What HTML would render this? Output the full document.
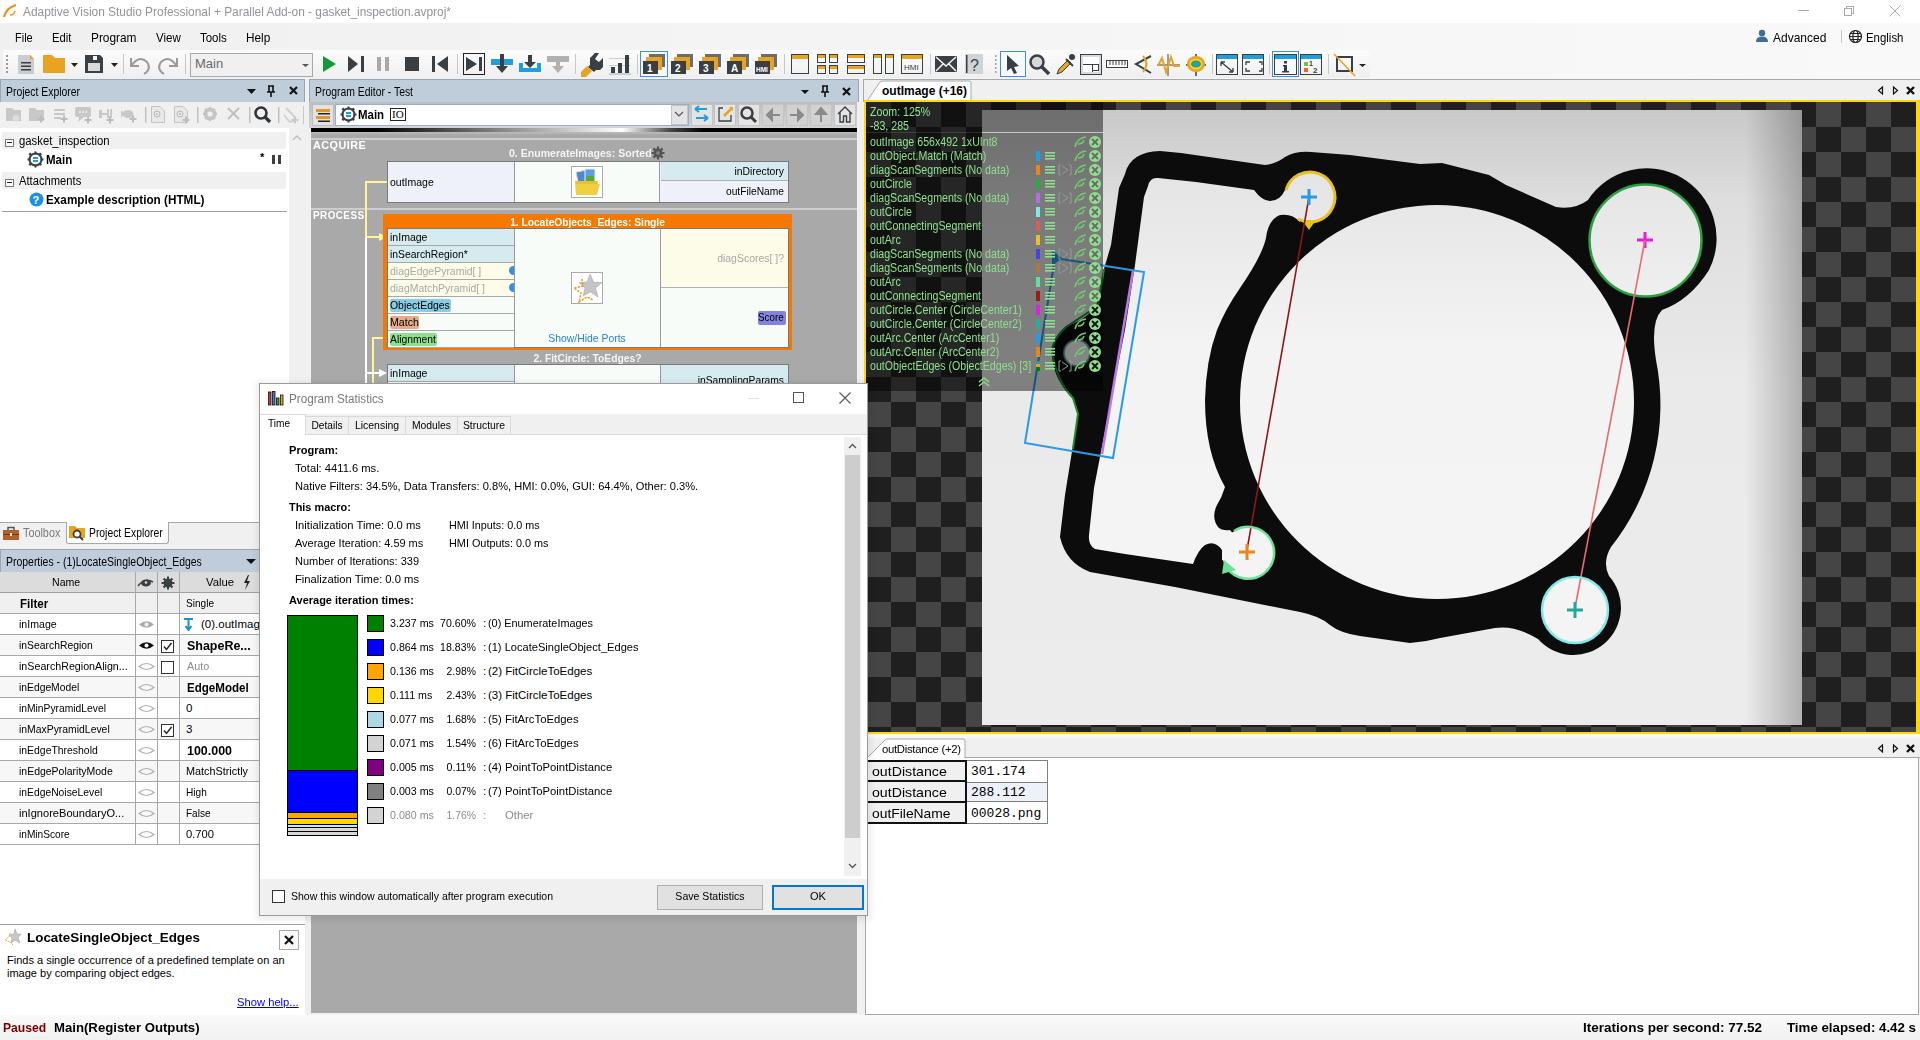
<!DOCTYPE html>
<html><head><meta charset="utf-8">
<style>
*{box-sizing:border-box;margin:0;padding:0}
html,body{width:1920px;height:1040px;overflow:hidden;background:#f0f0f0;font-family:"Liberation Sans",sans-serif;font-size:12px;color:#000}
.a{position:absolute}
.t{position:absolute;white-space:nowrap;line-height:1}
.hdr{position:absolute;background:#bfcddb;border:1px solid #9aa6b2;border-bottom:none}
.b{font-weight:bold}
</style></head><body>

<!-- TITLE BAR -->
<div class="a" style="left:0;top:0;width:1920px;height:23px;background:#fff"></div>
<svg class="a" style="left:2px;top:3px" width="16" height="16" viewBox="0 0 16 16"><path d="M2 14 Q4 5 14 2" stroke="#f28a1c" stroke-width="2" fill="none"/><path d="M13 8 Q12 12 8 12" stroke="#f28a1c" stroke-width="1.3" fill="none"/></svg>
<div class="t" style="left:23px;top:5px;font-size:13px;color:#939399;transform:scaleX(0.915);transform-origin:left;">Adaptive Vision Studio Professional + Parallel Add-on - gasket_inspection.avproj*</div>
<div class="a" style="left:1798px;top:10px;width:11px;height:1px;background:#aaa"></div>
<div class="a" style="left:1846px;top:6px;width:8px;height:8px;border:1px solid #aaa"></div>
<div class="a" style="left:1844px;top:8px;width:8px;height:8px;border:1px solid #aaa;background:#fff"></div>
<svg class="a" style="left:1889px;top:5px" width="12" height="12"><path d="M0.5 0.5 L11.5 11.5 M11.5 0.5 L0.5 11.5" stroke="#aaa" stroke-width="1"/></svg>

<!-- MENU BAR -->
<div class="a" style="left:0;top:23px;width:1920px;height:56px;background:linear-gradient(90deg,#f0f0f0 0%,#f4f4f4 40%,#f9f9f9 100%)"></div>
<div class="t" style="left:15px;top:31px;font-size:13px;transform:scaleX(0.845);transform-origin:left;">File</div>
<div class="t" style="left:52px;top:31px;font-size:13px;transform:scaleX(0.866);transform-origin:left;">Edit</div>
<div class="t" style="left:91px;top:31px;font-size:13px;transform:scaleX(0.913);transform-origin:left;">Program</div>
<div class="t" style="left:156px;top:31px;font-size:13px;transform:scaleX(0.887);transform-origin:left;">View</div>
<div class="t" style="left:200px;top:31px;font-size:13px;transform:scaleX(0.883);transform-origin:left;">Tools</div>
<div class="t" style="left:246px;top:31px;font-size:13px;transform:scaleX(0.908);transform-origin:left;">Help</div>
<div class="t" style="left:1773px;top:31px;font-size:13px;transform:scaleX(0.922);transform-origin:left;">Advanced</div>
<div class="t" style="left:1866px;top:31px;font-size:13px;transform:scaleX(0.879);transform-origin:left;">English</div>

<!-- TOOLBAR -->
<div class="a" style="left:3px;top:50px;width:1367px;height:28px;border-radius:3px;background:linear-gradient(#fcfcfc,#efefef)"></div>
<svg class="a" style="left:0;top:50px" width="1400" height="28" viewBox="0 50 1400 28">
<g fill="#9a9a9a"><rect x="6" y="55" width="2" height="2"/><rect x="6" y="59" width="2" height="2"/><rect x="6" y="63" width="2" height="2"/><rect x="6" y="67" width="2" height="2"/><rect x="6" y="71" width="2" height="2"/></g>
<path d="M18 55 H30 L34 59 V74 H18 Z" fill="#c9cdd1"/><path d="M30 55 L34 59 H30Z" fill="#e8a420"/>
<g fill="#3a3f44"><rect x="21" y="62" width="10" height="1.5"/><rect x="21" y="65.5" width="10" height="1.5"/><rect x="21" y="69" width="10" height="1.5"/></g>
<path d="M43 55 H52 L55 58 H65 V73 H43Z" fill="#e8a420"/>
<path d="M71 63 H78 L74.5 67Z" fill="#222"/>
<path d="M85 55 H100 L103 58 V73 H85Z" fill="#3a3f44"/><rect x="88" y="63" width="12" height="8" fill="#d6dadd"/><rect x="93" y="56" width="4" height="4" fill="#f5f5f5"/>
<path d="M111 63 H118 L114.5 67Z" fill="#222"/>
<rect x="123" y="54" width="1" height="20" fill="#c8c8c8"/>
<path d="M131 58 V66 H139" fill="none" stroke="#9a9a9a" stroke-width="2"/><path d="M132 65 Q139 55 147 62 Q152 69 144 74" fill="none" stroke="#9a9a9a" stroke-width="2"/>
<path d="M177 58 V66 H169" fill="none" stroke="#9a9a9a" stroke-width="2"/><path d="M176 65 Q169 55 161 62 Q156 69 164 74" fill="none" stroke="#9a9a9a" stroke-width="2"/>
<rect x="185" y="54" width="1" height="20" fill="#c8c8c8"/>
<rect x="190.5" y="53.5" width="122" height="23" fill="#f0f0f0" stroke="#a8a8a8"/>
<path d="M302 64 H309 L305.5 67Z" fill="#555"/>
<path d="M323 56 L336 64 L323 72Z" fill="#129a3a"/>
<path d="M348 56 L358 64 L348 72Z" fill="#3a3f44"/><rect x="361" y="56" width="3" height="16" fill="#3a3f44"/>
<rect x="377" y="57" width="4" height="14" fill="#a8a8a8"/><rect x="385" y="57" width="4" height="14" fill="#a8a8a8"/>
<rect x="405" y="57" width="14" height="14" fill="#3a3f44"/>
<rect x="432" y="56" width="3" height="16" fill="#3a3f44"/><path d="M448 56 L437 64 L448 72Z" fill="#3a3f44"/>
<rect x="457" y="54" width="1" height="20" fill="#c8c8c8"/>
<rect x="463.5" y="53.5" width="21" height="21" fill="none" stroke="#222"/>
<path d="M466 57 L477 64 L466 71Z" fill="#3a3f44"/><rect x="479" y="57" width="3" height="14" fill="#3a3f44"/>
<rect x="491" y="59" width="22" height="6" fill="#1f9ee0"/><rect x="500" y="54" width="4" height="13" fill="#3a3f44"/><path d="M496 66 H508 L502 73Z" fill="#3a3f44"/>
<path d="M519 63 H523 V68 H537 V63 H541 V72 H519Z" fill="#1f9ee0"/><rect x="528" y="55" width="4" height="8" fill="#3a3f44"/><path d="M524 62 H536 L530 68Z" fill="#3a3f44"/>
<rect x="547" y="56" width="22" height="6" fill="#b0b0b0"/><rect x="556" y="61" width="4" height="7" fill="#b0b0b0"/><path d="M552 66 H564 L558 73Z" fill="#b0b0b0"/>
<rect x="575" y="54" width="1" height="20" fill="#c8c8c8"/>
<path d="M595 53 L590 58 V65 L588 67 L594 72 L596 70 H600 L603 67 V58 L599 62 L595 59 L599 53Z" fill="#3a3f44"/>
<path d="M587 66 L592 71 L586 77 H581 V72Z" fill="#e8a420"/>
<g fill="#c8d0d6"><rect x="609" y="58" width="22" height="1"/><rect x="609" y="65" width="22" height="1"/><rect x="609" y="73" width="22" height="2"/></g>
<g fill="#3a3f44"><rect x="611" y="67" width="4" height="6"/><rect x="618" y="63" width="4" height="10"/><rect x="625" y="55" width="4" height="18"/></g>
<rect x="637" y="54" width="1" height="20" fill="#c8c8c8"/>
<rect x="640.5" y="51.5" width="27" height="25" fill="#f6f9fd" stroke="#3c8ee8"/>
<g id="lay"><rect x="649" y="54" width="16" height="13" fill="#6b6e70"/><rect x="646" y="57" width="16" height="13" fill="#e8a420"/><rect x="643" y="61" width="15" height="13" fill="#3a3f44"/></g>
<use href="#lay" x="28"/><use href="#lay" x="56"/><use href="#lay" x="84"/><use href="#lay" x="112"/>
<g fill="#fff" font-family="Liberation Sans" font-weight="bold"><text x="647" y="72" font-size="10">1</text><text x="675" y="72" font-size="10">2</text><text x="703" y="72" font-size="10">3</text><text x="731" y="72" font-size="10">A</text><text x="756" y="72" font-size="6.5">HMI</text></g>
<rect x="784" y="54" width="1" height="20" fill="#c8c8c8"/>
<g fill="none" stroke="#3a3f44" stroke-width="1"><rect x="791.5" y="54.5" width="17" height="19"/><rect x="817.5" y="54.5" width="8" height="8"/><rect x="829.5" y="54.5" width="8" height="8"/><rect x="817.5" y="65.5" width="8" height="8"/><rect x="829.5" y="65.5" width="8" height="8"/><rect x="847.5" y="54.5" width="17" height="8"/><rect x="847.5" y="65.5" width="17" height="8"/><rect x="873.5" y="54.5" width="8" height="19"/><rect x="885.5" y="54.5" width="8" height="19"/><rect x="901.5" y="54.5" width="21" height="19"/></g>
<g fill="#e8a420"><rect x="792" y="55" width="16" height="4"/><rect x="818" y="55" width="7" height="3"/><rect x="830" y="55" width="7" height="3"/><rect x="818" y="66" width="7" height="3"/><rect x="830" y="66" width="7" height="3"/><rect x="848" y="55" width="16" height="3"/><rect x="848" y="66" width="16" height="3"/><rect x="874" y="55" width="7" height="3"/><rect x="886" y="55" width="7" height="3"/><rect x="902" y="55" width="20" height="4"/></g>
<text x="904" y="70" font-size="8" font-family="Liberation Sans" fill="#3a3f44">HMI</text>
<rect x="930" y="54" width="1" height="20" fill="#c8c8c8"/>
<rect x="935" y="56" width="22" height="16" rx="1" fill="#3a3f44"/><path d="M936 57 L946 66 L956 57 M936 71 L943 64 M956 71 L949 64" stroke="#f5f5f5" stroke-width="1.5" fill="none"/>
<rect x="965" y="54" width="18" height="20" fill="#d0d4d8"/><rect x="966" y="55" width="1.5" height="18" fill="#3a3f44"/><text x="970" y="71" font-size="16" font-family="Liberation Sans" fill="#3a3f44">?</text>
<g fill="#a0a0a0"><rect x="995" y="55" width="1.5" height="2"/><rect x="995" y="59" width="1.5" height="2"/><rect x="995" y="63" width="1.5" height="2"/><rect x="995" y="67" width="1.5" height="2"/><rect x="995" y="71" width="1.5" height="2"/></g>
<rect x="1000.5" y="51.5" width="25" height="25" fill="#f6f9fd" stroke="#3c8ee8"/>
<path d="M1007 55 L1019 66 L1014 67 L1017 73 L1014 74 L1011 68 L1007 71Z" fill="#3a3f44"/>
<circle cx="1037" cy="62" r="6.5" fill="#d6dadd" stroke="#3a3f44" stroke-width="2.5"/><path d="M1042 67 L1049 74" stroke="#3a3f44" stroke-width="3.5"/>
<path d="M1057 74 L1059 69 L1068 60 L1071 63 L1062 72Z" fill="#e8a420" stroke="#3a3f44" stroke-width="1"/><circle cx="1072" cy="57" r="3" fill="#3a3f44"/><path d="M1066 59 L1073 66" stroke="#3a3f44" stroke-width="2"/>
<rect x="1080.5" y="54.5" width="21" height="20" fill="#d6dadd" stroke="#3a3f44"/><rect x="1083" y="57" width="16" height="15" fill="#fff"/><rect x="1092.5" y="64.5" width="6" height="6" fill="#fff" stroke="#3a3f44"/><path d="M1083 64.5 H1092.5 V72" fill="none" stroke="#3a3f44"/>
<rect x="1106.5" y="60.5" width="21" height="7" fill="#fff" stroke="#3a3f44"/><path d="M1110 61 V65 M1113 61 V65 M1116 61 V65 M1119 61 V65 M1122 61 V65 M1125 61 V65" stroke="#3a3f44"/>
<path d="M1151 56 L1136 64 L1151 73" fill="none" stroke="#3a3f44" stroke-width="2"/><path d="M1143 56 Q1150 64 1143 72" fill="none" stroke="#e8a420" stroke-width="2"/>
<path d="M1157 65 H1180 M1168 54 V76" stroke="#3a3f44" stroke-width="1"/><path d="M1158 66 L1162 58 L1166 72 L1171 57 L1174 66 L1180 66" fill="none" stroke="#e8a420" stroke-width="2"/>
<path d="M1186 65 H1206 M1196 54 V76" stroke="#3a3f44" stroke-width="1.5"/><ellipse cx="1196" cy="64" rx="9" ry="8" fill="#e8a420"/><ellipse cx="1196" cy="64" rx="6.5" ry="5.5" fill="#f4d23c"/><ellipse cx="1196" cy="64" rx="5" ry="3.5" fill="#2aa84a"/><ellipse cx="1196" cy="64" rx="3" ry="2" fill="#1f9ee0"/>
<rect x="1212" y="54" width="1" height="20" fill="#c8c8c8"/>
<g fill="none" stroke="#3a3f44"><rect x="1216.5" y="54.5" width="21" height="20"/><rect x="1242.5" y="54.5" width="21" height="20"/><rect x="1274.5" y="54.5" width="22" height="20"/><rect x="1300.5" y="54.5" width="21" height="20"/></g>
<g fill="#1f9ee0"><rect x="1217" y="55" width="20" height="4"/><rect x="1243" y="55" width="20" height="4"/><rect x="1275" y="55" width="21" height="4"/><rect x="1301" y="55" width="20" height="4"/></g>
<path d="M1221 62 L1233 72 M1221 62 H1225 M1221 62 V66 M1233 72 H1229 M1233 72 V68" stroke="#3a3f44" fill="none" stroke-width="1.3"/>
<path d="M1246 65 V62 H1250 M1259 62 H1262 V65 M1262 68 V71 H1259 M1250 71 H1246 V68" stroke="#3a3f44" fill="none" stroke-width="1.3"/>
<rect x="1269" y="54" width="1" height="20" fill="#c8c8c8"/>
<rect x="1272.5" y="51.5" width="26" height="25" fill="#f6f9fd" stroke="#3c8ee8"/>
<rect x="1274.5" y="54.5" width="22" height="20" fill="none" stroke="#3a3f44"/><rect x="1275" y="55" width="21" height="4" fill="#1f9ee0"/>
<rect x="1284" y="61" width="3" height="2.5" fill="#3a3f44"/><path d="M1283 65 H1287 V71 H1289 V72.5 H1282 V71 H1284 V66.5 H1283Z" fill="#3a3f44"/>
<rect x="1304" y="62" width="4" height="4" fill="#7ac143"/><rect x="1304" y="68" width="4" height="4" fill="#f26522"/>
<text x="1309" y="66" font-size="7" font-family="Liberation Sans" fill="#3a3f44" font-weight="bold">1</text><text x="1313" y="73" font-size="8" font-family="Liberation Sans" fill="#3a3f44" font-weight="bold">2</text>
<rect x="1328" y="54" width="1" height="20" fill="#c8c8c8"/>
<rect x="1337" y="57" width="15" height="14" fill="none" stroke="#3a3f44" stroke-width="2"/><path d="M1334 54 L1355 76" stroke="#e8a420" stroke-width="1.6"/>
<path d="M1359 64 H1366 L1362.5 67Z" fill="#222"/>
</svg>
<div class="t" style="left:195px;top:57px;font-size:13px;color:#6a6a6a">Main</div>


<!-- PROJECT EXPLORER -->
<div class="hdr" style="left:0;top:79px;width:305px;height:23px"></div>
<div class="t" style="left:6px;top:86px;font-size:12px;transform:scaleX(0.867);transform-origin:left;">Project Explorer</div>
<svg class="a" style="left:240px;top:80px" width="65" height="22" viewBox="240 80 65 22">
<path d="M247 89 H256 L251.5 94Z" fill="#111"/>
<path d="M268 86 H274 M269 86 V92 M273 86 V92 M267 92 H275 M271 92 V97" stroke="#111" stroke-width="1.6" fill="none"/>
<path d="M290 87 L297 94 M297 87 L290 94" stroke="#111" stroke-width="2.2"/>
</svg>
<div class="a" style="left:0;top:102px;width:305px;height:26px;background:#f0f0f0"></div>
<svg class="a" style="left:0;top:102px" width="305" height="26" viewBox="0 102 305 26">
<defs><g id="pl"><rect x="-3.5" y="-1" width="7" height="2"/><rect x="-1" y="-3.5" width="2" height="7"/></g>
<g id="gr"><circle cx="0" cy="0" r="3" fill="none" stroke="#c4c4c4" stroke-width="1.6"/><path d="M0 -5 V5 M-5 0 H5 M-3.5 -3.5 L3.5 3.5 M3.5 -3.5 L-3.5 3.5" stroke="#c4c4c4" stroke-width="1.5"/></g></defs>
<g fill="#c8c8c8">
<path d="M6 108 H12 L14 110 H21 V121 H6Z"/>
<circle cx="16" cy="118" r="3.5" fill="#dcdcdc"/>
<path d="M29 108 H35 L37 110 H44 V121 H29Z"/>
<use href="#pl" x="41" y="119" fill="#bcbcbc"/>
<rect x="54" y="109" width="11" height="2"/><rect x="54" y="113" width="11" height="2"/><rect x="54" y="117" width="7" height="2"/>
<use href="#pl" x="64" y="119" fill="#bcbcbc"/>
<rect x="75" y="107" width="16" height="10" rx="2"/><path d="M79 117 L78 122 L84 117Z"/>
<g fill="#e4e4e4"><rect x="79" y="111" width="2" height="2"/><rect x="82" y="111" width="2" height="2"/><rect x="85" y="111" width="2" height="2"/></g>
<use href="#pl" x="88" y="120" fill="#bcbcbc"/>
<rect x="99" y="110" width="3" height="8"/><rect x="102" y="113" width="6" height="2"/><rect x="107" y="109" width="2" height="9"/><rect x="110" y="109" width="2" height="9"/>
<use href="#pl" x="110" y="120" fill="#bcbcbc"/>
<ellipse cx="128" cy="114" rx="5.5" ry="4"/><path d="M121 110 L124 114 L121 118Z"/>
<use href="#pl" x="133" y="119" fill="#bcbcbc"/>
<rect x="145" y="107" width="1.5" height="16" fill="#c0c0c0"/>
<path d="M151.5 106.5 H160 L164.5 111 V122.5 H151.5Z" fill="#e8e8e8" stroke="#c4c4c4"/>
<circle cx="157" cy="114" r="3" fill="none" stroke="#b8b8b8"/><circle cx="157" cy="114" r="1" fill="#b8b8b8"/>
<path d="M174.5 106.5 H183 L187.5 111 V122.5 H174.5Z" fill="#e8e8e8" stroke="#c4c4c4"/>
<circle cx="180" cy="114" r="3" fill="none" stroke="#b8b8b8"/><circle cx="180" cy="114" r="1" fill="#b8b8b8"/>
<use href="#pl" x="186" y="120" fill="#bcbcbc"/>
<rect x="197" y="107" width="1.5" height="16" fill="#c0c0c0"/>
<circle cx="210" cy="114" r="5" fill="none" stroke="#c4c4c4" stroke-width="3"/>
<path d="M210 107 V121 M203 114 H217 M205 109 L215 119 M215 109 L205 119" stroke="#c4c4c4" stroke-width="2"/>
<circle cx="210" cy="114" r="2.5" fill="#f0f0f0"/>
<path d="M228 108 L239 119 M239 108 L228 119" stroke="#c0c0c0" stroke-width="2"/>
<rect x="249" y="107" width="1.5" height="16" fill="#c0c0c0"/>
<rect x="278" y="107" width="1.5" height="16" fill="#c0c0c0"/>
<path d="M286 108 L294 116 Q296 119 293 121 Q290 123 288 120 L284 115" fill="none" stroke="#d0d0d0" stroke-width="2"/>
<use href="#pl" x="295" y="120" fill="#c8c8c8"/>
<rect x="303" y="106" width="1" height="18" fill="#c8c8c8"/>
</g>
<circle cx="261" cy="113" r="5.5" fill="#f0f0f0" stroke="#2f3438" stroke-width="2.6"/><path d="M265 117 L270 122" stroke="#2f3438" stroke-width="3.2"/>
</svg>
<div class="a" style="left:0;top:128px;width:289px;height:395px;background:#fff"></div>
<div class="a" style="left:289px;top:128px;width:16px;height:395px;background:#f0f0f0"></div>
<svg class="a" style="left:289px;top:128px" width="16" height="20"><path d="M4 12 L8 8 L12 12" stroke="#c0c0c0" stroke-width="1.5" fill="none"/></svg>
<div class="a" style="left:2px;top:132px;width:284px;height:17px;background:#f0f0f0"></div>
<div class="a" style="left:2px;top:172px;width:284px;height:17px;background:#f0f0f0"></div>
<div class="a" style="left:5px;top:139px;width:9px;height:8px;border:1px solid #777;background:#fff"></div><div class="a" style="left:7px;top:142px;width:5px;height:1px;background:#222"></div>
<div class="a" style="left:5px;top:179px;width:9px;height:8px;border:1px solid #777;background:#fff"></div><div class="a" style="left:7px;top:182px;width:5px;height:1px;background:#222"></div>
<div class="t" style="left:19px;top:135px;font-size:12px;transform:scaleX(0.943);transform-origin:left;">gasket_inspection</div>
<div class="t" style="left:19px;top:175px;font-size:12px;transform:scaleX(0.934);transform-origin:left;">Attachments</div>
<svg class="a" style="left:27px;top:151px" width="17" height="17" viewBox="0 0 17 17"><circle cx="8.5" cy="8.5" r="6" fill="#fff" stroke="#3a3f44" stroke-width="2"/><g fill="#3a3f44"><rect x="7.5" y="0.5" width="2" height="3"/><rect x="7.5" y="13.5" width="2" height="3"/><rect x="0.5" y="7.5" width="3" height="2"/><rect x="13.5" y="7.5" width="3" height="2"/><rect x="2" y="2" width="2.5" height="2.5" transform="rotate(45 3.2 3.2)"/><rect x="12" y="2" width="2.5" height="2.5" transform="rotate(45 13.2 3.2)"/><rect x="2" y="12" width="2.5" height="2.5" transform="rotate(45 3.2 13.2)"/><rect x="12" y="12" width="2.5" height="2.5" transform="rotate(45 13.2 13.2)"/></g><rect x="6" y="6" width="5" height="2" fill="#1f9ee0"/><rect x="6" y="9" width="5" height="2" fill="#1f9ee0"/></svg>
<div class="t b" style="left:46px;top:154px;font-size:12px;transform:scaleX(0.958);transform-origin:left;">Main</div>
<div class="t b" style="left:260px;top:152px;font-size:11px">*</div>
<div class="a" style="left:272px;top:155px;width:3px;height:9px;background:#3a3f44"></div><div class="a" style="left:278px;top:155px;width:3px;height:9px;background:#3a3f44"></div>
<svg class="a" style="left:29px;top:192px" width="15" height="15"><circle cx="7.5" cy="7.5" r="7" fill="#1f8fe8"/><text x="3.5" y="12" font-size="11" font-weight="bold" fill="#fff" font-family="Liberation Sans">?</text></svg>
<div class="t b" style="left:46px;top:194px;font-size:12px;transform:scaleX(0.978);transform-origin:left;">Example description (HTML)</div>
<div class="a" style="left:2px;top:211px;width:285px;height:1px;background:#a0a0a0"></div>

<!-- tabs -->
<div class="a" style="left:0;top:523px;width:305px;height:26px;background:#f0f0f0"></div>
<div class="a" style="left:66px;top:522px;width:103px;height:22px;background:#fff;border:1px solid #a8a8a8;border-top:none;border-radius:0 0 3px 3px"></div>
<div class="a" style="left:0;top:522px;width:66px;height:1px;background:#a8a8a8"></div>
<div class="a" style="left:169px;top:522px;width:136px;height:1px;background:#a8a8a8"></div>
<svg class="a" style="left:3px;top:526px" width="16" height="14"><rect x="0" y="4" width="16" height="10" fill="#b0622a"/><rect x="0" y="8" width="16" height="1" fill="#7a3a10"/><path d="M5 4 V1.5 H11 V4" stroke="#555" stroke-width="1.5" fill="none"/><rect x="7" y="7" width="2" height="3" fill="#eee"/></svg>
<div class="t" style="left:23px;top:527px;font-size:12px;color:#7a7a7a;transform:scaleX(0.902);transform-origin:left;">Toolbox</div>
<svg class="a" style="left:69px;top:525px" width="17" height="16"><path d="M0 1 H6 L8 3 H16 V13 H0Z" fill="#e8a420"/><circle cx="8" cy="9" r="3.5" fill="#fff" stroke="#3a3f44" stroke-width="1.8"/><path d="M10.5 11.5 L14 15" stroke="#3a3f44" stroke-width="2"/></svg>
<div class="t" style="left:89px;top:527px;font-size:12px;transform:scaleX(0.862);transform-origin:left;">Project Explorer</div>

<!-- properties -->
<div class="hdr" style="left:0;top:549px;width:305px;height:23px"></div>
<div class="t" style="left:6px;top:556px;font-size:12px;transform:scaleX(0.871);transform-origin:left;">Properties - (1)LocateSingleObject_Edges</div>
<svg class="a" style="left:245px;top:558px" width="12" height="8"><path d="M1 1 H11 L6 6Z" fill="#111"/></svg>
<div class="a" style="left:0;top:572px;width:305px;height:21px;background:#dcdcdc;border-bottom:1px solid #a0a0a0"></div>
<div class="t" style="left:52px;top:577px;font-size:11.5px;transform:scaleX(0.919);transform-origin:left;">Name</div>
<svg class="a" style="left:137px;top:576px" width="40" height="14"><path d="M1 10 Q8 1 16 6" stroke="#3a3f44" stroke-width="1.5" fill="none"/><ellipse cx="9" cy="7" rx="5" ry="3.5" fill="#3a3f44"/><circle cx="9" cy="6.5" r="1.3" fill="#ddd"/>
<circle cx="31" cy="7" r="4.5" fill="#3a3f44"/><circle cx="31" cy="7" r="1.8" fill="#dcdcdc"/><g stroke="#3a3f44" stroke-width="2"><path d="M31 0.5 V13.5 M24.5 7 H37.5 M26.5 2.5 L35.5 11.5 M35.5 2.5 L26.5 11.5"/></g></svg>
<div class="t" style="left:206px;top:577px;font-size:11.5px;transform:scaleX(0.984);transform-origin:left;">Value</div>
<svg class="a" style="left:243px;top:575px" width="8" height="15"><path d="M5 0 L1 8 H4 L2 15 L7 6 H4 L6 0Z" fill="#222"/></svg>
<div class="a" style="left:0;top:593px;width:305px;height:21px;background:#f0f0f0;border-bottom:1px solid #a8a8a8"></div>
<div class="t b" style="left:20px;top:598px;font-size:12px;transform:scaleX(0.963);transform-origin:left;">Filter</div>
<div class="t" style="left:186px;top:598px;font-size:11.5px;transform:scaleX(0.876);transform-origin:left;">Single</div>
<div class="a" style="left:0;top:614px;width:305px;height:21px;background:#fff;border-bottom:1px solid #a8a8a8"></div>
<div class="t" style="left:19px;top:619px;font-size:11.5px;transform:scaleX(0.922);transform-origin:left;">inImage</div>
<svg class="a" style="left:138px;top:620px" width="17" height="9"><path d="M1 4.5 Q8.5 -2 16 4.5 Q8.5 11 1 4.5Z" fill="#aaa"/><circle cx="8.5" cy="4.5" r="2" fill="#eee"/></svg>
<svg class="a" style="left:184px;top:618px" width="10" height="13"><path d="M0 1 H9 M4.5 1 V11 M1.5 8 L4.5 12 L7.5 8" stroke="#1f8fd0" stroke-width="2" fill="none"/></svg>
<div class="t" style="left:201px;top:619px;font-size:11.5px">(0).outImag</div>
<div class="a" style="left:0;top:635px;width:305px;height:21px;background:#f7f7f7;border-bottom:1px solid #a8a8a8"></div>
<div class="t" style="left:19px;top:640px;font-size:11.5px;transform:scaleX(0.901);transform-origin:left;">inSearchRegion</div>
<svg class="a" style="left:138px;top:641px" width="17" height="9"><path d="M1 4.5 Q8.5 -2 16 4.5 Q8.5 11 1 4.5Z" fill="#111"/><circle cx="8.5" cy="4.5" r="2" fill="#fff"/></svg>
<div class="a" style="left:161px;top:640px;width:13px;height:13px;border:1px solid #333;background:#fff"></div>
<svg class="a" style="left:161px;top:640px" width="13" height="13"><path d="M3 6.5 L5.5 9.5 L10.5 3" stroke="#222" stroke-width="1.4" fill="none"/></svg>
<div class="t b" style="left:187px;top:640px;font-size:12px;transform:scaleX(1.039);transform-origin:left;">ShapeRe...</div>
<div class="a" style="left:0;top:656px;width:305px;height:21px;background:#fff;border-bottom:1px solid #a8a8a8"></div>
<div class="t" style="left:19px;top:661px;font-size:11.5px;transform:scaleX(0.929);transform-origin:left;">inSearchRegionAlign...</div>
<svg class="a" style="left:138px;top:662px" width="17" height="9"><path d="M1 4.5 Q8.5 -1.5 16 4.5 Q8.5 10.5 1 4.5Z" fill="none" stroke="#b0b0b0" stroke-width="1.2"/></svg>
<div class="a" style="left:161px;top:661px;width:13px;height:13px;border:1px solid #333;background:#fff"></div>
<div class="t" style="left:187px;top:661px;font-size:11.5px;color:#8a8a8a;transform:scaleX(0.940);transform-origin:left;">Auto</div>
<div class="a" style="left:0;top:677px;width:305px;height:21px;background:#f7f7f7;border-bottom:1px solid #a8a8a8"></div>
<div class="t" style="left:19px;top:682px;font-size:11.5px;transform:scaleX(0.897);transform-origin:left;">inEdgeModel</div>
<svg class="a" style="left:138px;top:683px" width="17" height="9"><path d="M1 4.5 Q8.5 -1.5 16 4.5 Q8.5 10.5 1 4.5Z" fill="none" stroke="#b0b0b0" stroke-width="1.2"/></svg>
<div class="t b" style="left:187px;top:682px;font-size:12px;transform:scaleX(0.965);transform-origin:left;">EdgeModel</div>
<div class="a" style="left:0;top:698px;width:305px;height:21px;background:#fff;border-bottom:1px solid #a8a8a8"></div>
<div class="t" style="left:19px;top:703px;font-size:11.5px;transform:scaleX(0.895);transform-origin:left;">inMinPyramidLevel</div>
<svg class="a" style="left:138px;top:704px" width="17" height="9"><path d="M1 4.5 Q8.5 -1.5 16 4.5 Q8.5 10.5 1 4.5Z" fill="none" stroke="#b0b0b0" stroke-width="1.2"/></svg>
<div class="t" style="left:186px;top:703px;font-size:11.5px">0</div>
<div class="a" style="left:0;top:719px;width:305px;height:21px;background:#f7f7f7;border-bottom:1px solid #a8a8a8"></div>
<div class="t" style="left:19px;top:724px;font-size:11.5px;transform:scaleX(0.904);transform-origin:left;">inMaxPyramidLevel</div>
<svg class="a" style="left:138px;top:725px" width="17" height="9"><path d="M1 4.5 Q8.5 -1.5 16 4.5 Q8.5 10.5 1 4.5Z" fill="none" stroke="#b0b0b0" stroke-width="1.2"/></svg>
<div class="a" style="left:161px;top:724px;width:13px;height:13px;border:1px solid #333;background:#fff"></div>
<svg class="a" style="left:161px;top:724px" width="13" height="13"><path d="M3 6.5 L5.5 9.5 L10.5 3" stroke="#222" stroke-width="1.4" fill="none"/></svg>
<div class="t" style="left:186px;top:724px;font-size:11.5px">3</div>
<div class="a" style="left:0;top:740px;width:305px;height:21px;background:#fff;border-bottom:1px solid #a8a8a8"></div>
<div class="t" style="left:19px;top:745px;font-size:11.5px;transform:scaleX(0.906);transform-origin:left;">inEdgeThreshold</div>
<svg class="a" style="left:138px;top:746px" width="17" height="9"><path d="M1 4.5 Q8.5 -1.5 16 4.5 Q8.5 10.5 1 4.5Z" fill="none" stroke="#b0b0b0" stroke-width="1.2"/></svg>
<div class="t b" style="left:187px;top:745px;font-size:12px;transform:scaleX(1.037);transform-origin:left;">100.000</div>
<div class="a" style="left:0;top:761px;width:305px;height:21px;background:#f7f7f7;border-bottom:1px solid #a8a8a8"></div>
<div class="t" style="left:19px;top:766px;font-size:11.5px;transform:scaleX(0.911);transform-origin:left;">inEdgePolarityMode</div>
<svg class="a" style="left:138px;top:767px" width="17" height="9"><path d="M1 4.5 Q8.5 -1.5 16 4.5 Q8.5 10.5 1 4.5Z" fill="none" stroke="#b0b0b0" stroke-width="1.2"/></svg>
<div class="t" style="left:186px;top:766px;font-size:11.5px;transform:scaleX(0.942);transform-origin:left;">MatchStrictly</div>
<div class="a" style="left:0;top:782px;width:305px;height:21px;background:#fff;border-bottom:1px solid #a8a8a8"></div>
<div class="t" style="left:19px;top:787px;font-size:11.5px;transform:scaleX(0.898);transform-origin:left;">inEdgeNoiseLevel</div>
<svg class="a" style="left:138px;top:788px" width="17" height="9"><path d="M1 4.5 Q8.5 -1.5 16 4.5 Q8.5 10.5 1 4.5Z" fill="none" stroke="#b0b0b0" stroke-width="1.2"/></svg>
<div class="t" style="left:186px;top:787px;font-size:11.5px;transform:scaleX(0.877);transform-origin:left;">High</div>
<div class="a" style="left:0;top:803px;width:305px;height:21px;background:#f7f7f7;border-bottom:1px solid #a8a8a8"></div>
<div class="t" style="left:19px;top:808px;font-size:11.5px;transform:scaleX(0.963);transform-origin:left;">inIgnoreBoundaryO...</div>
<svg class="a" style="left:138px;top:809px" width="17" height="9"><path d="M1 4.5 Q8.5 -1.5 16 4.5 Q8.5 10.5 1 4.5Z" fill="none" stroke="#b0b0b0" stroke-width="1.2"/></svg>
<div class="t" style="left:186px;top:808px;font-size:11.5px;transform:scaleX(0.871);transform-origin:left;">False</div>
<div class="a" style="left:0;top:824px;width:305px;height:21px;background:#fff;border-bottom:1px solid #a8a8a8"></div>
<div class="t" style="left:19px;top:829px;font-size:11.5px;transform:scaleX(0.882);transform-origin:left;">inMinScore</div>
<svg class="a" style="left:138px;top:830px" width="17" height="9"><path d="M1 4.5 Q8.5 -1.5 16 4.5 Q8.5 10.5 1 4.5Z" fill="none" stroke="#b0b0b0" stroke-width="1.2"/></svg>
<div class="t" style="left:186px;top:829px;font-size:11.5px;transform:scaleX(0.973);transform-origin:left;">0.700</div>
<div class="a" style="left:135px;top:572px;width:1px;height:273px;background:#a8a8a8"></div>
<div class="a" style="left:157px;top:572px;width:1px;height:273px;background:#a8a8a8"></div>
<div class="a" style="left:179px;top:572px;width:1px;height:273px;background:#a8a8a8"></div>
<div class="a" style="left:0;top:845px;width:305px;height:79px;background:#fff"></div>
<div class="a" style="left:0;top:924px;width:305px;height:1px;background:#a0a0a0"></div>
<div class="a" style="left:0;top:925px;width:305px;height:90px;background:#fff"></div>
<svg class="a" style="left:4px;top:928px" width="18" height="18"><path d="M11 1 L13 6 L17 6 L14 10 L16 15 L11 12 L7 15 L8 10 L5 7 L10 6Z" fill="#c8c8c8" stroke="#999" stroke-width="0.5"/><path d="M6 5 L5 9 L1 12 L6 14 L9 17" stroke="#e8a420" stroke-width="1" fill="none" stroke-dasharray="1.5 1"/></svg>
<div class="t b" style="left:27px;top:931px;font-size:13px;transform:scaleX(1.032);transform-origin:left;">LocateSingleObject_Edges</div>
<div class="a" style="left:279px;top:930px;width:20px;height:20px;border:1px solid #aaa;background:#fafafa"></div>
<svg class="a" style="left:284px;top:935px" width="10" height="10"><path d="M1 1 L9 9 M9 1 L1 9" stroke="#111" stroke-width="2.2"/></svg>
<div class="t" style="left:7px;top:954px;font-size:11px;line-height:13px">Finds a single occurrence of a predefined template on an<br>image by comparing object edges.</div>
<div class="t" style="left:237px;top:997px;font-size:11px;color:#0000ee;text-decoration:underline;transform:scaleX(1.019);transform-origin:left;">Show help...</div>

<!-- PROGRAM EDITOR -->
<div class="hdr" style="left:309px;top:79px;width:550px;height:23px"></div>
<div class="t" style="left:315px;top:86px;font-size:12px;transform:scaleX(0.866);transform-origin:left;">Program Editor - Test</div>
<svg class="a" style="left:795px;top:80px" width="64" height="22" viewBox="795 80 64 22">
<path d="M801 90 H809 L805 94Z" fill="#111"/>
<path d="M822 86 H828 M823 86 V92 M827 86 V92 M821 92 H829 M825 92 V97" stroke="#111" stroke-width="1.6" fill="none"/>
<path d="M843 88 L850 95 M850 88 L843 95" stroke="#111" stroke-width="2.2"/>
</svg>
<div class="a" style="left:309px;top:102px;width:550px;height:26px;background:linear-gradient(#bdbdbd,#d4d4d4)"></div>
<div class="a" style="left:312px;top:104px;width:22px;height:22px;background:#e2e2e2;border:1px solid #bcbcbc"></div>
<svg class="a" style="left:312px;top:104px" width="22" height="22"><rect x="4" y="5" width="14" height="3" fill="#e8962a"/><rect x="6" y="9" width="12" height="1.5" fill="#222"/><rect x="4" y="12" width="14" height="3" fill="#e8962a"/><rect x="6" y="16.5" width="12" height="1.5" fill="#222"/></svg>
<div class="a" style="left:335px;top:104px;width:354px;height:22px;background:#fff;border:1px solid #8fb0d8"></div>
<svg class="a" style="left:340px;top:106px" width="17" height="17" viewBox="0 0 17 17"><circle cx="8.5" cy="8.5" r="6" fill="#fff" stroke="#3a3f44" stroke-width="2"/><g fill="#3a3f44"><rect x="7.5" y="0.5" width="2" height="3"/><rect x="7.5" y="13.5" width="2" height="3"/><rect x="0.5" y="7.5" width="3" height="2"/><rect x="13.5" y="7.5" width="3" height="2"/><rect x="2" y="2" width="2.5" height="2.5" transform="rotate(45 3.2 3.2)"/><rect x="12" y="2" width="2.5" height="2.5" transform="rotate(45 13.2 3.2)"/><rect x="2" y="12" width="2.5" height="2.5" transform="rotate(45 3.2 13.2)"/><rect x="12" y="12" width="2.5" height="2.5" transform="rotate(45 13.2 13.2)"/></g><rect x="6" y="6" width="5" height="2" fill="#1f9ee0"/><rect x="6" y="9" width="5" height="2" fill="#1f9ee0"/></svg>
<div class="t b" style="left:358px;top:108px;font-size:13px;transform:scaleX(0.881);transform-origin:left;">Main</div>
<div class="a" style="left:390px;top:108px;width:16px;height:13px;border:1px solid #222"></div>
<div class="t" style="left:392px;top:109px;font-size:11px;font-family:'Liberation Serif',serif">IO</div>
<div class="a" style="left:671px;top:105px;width:17px;height:20px;background:#e4e4e4;border:1px solid #c4c4c4"></div>
<svg class="a" style="left:673px;top:110px" width="12" height="8"><path d="M2 2 L6 6 L10 2" stroke="#555" stroke-width="1.2" fill="none"/></svg>
<div class="a" style="left:691px;top:104px;width:22px;height:22px;background:#e4e4e4;border:1px solid #c4c4c4"></div>
<div class="a" style="left:714px;top:104px;width:22px;height:22px;background:#e4e4e4;border:1px solid #c4c4c4"></div>
<div class="a" style="left:738px;top:104px;width:22px;height:22px;background:#e4e4e4;border:1px solid #c4c4c4"></div>
<div class="a" style="left:762px;top:104px;width:22px;height:22px;background:#d2d2d2;border:1px solid #c4c4c4"></div>
<div class="a" style="left:786px;top:104px;width:22px;height:22px;background:#d2d2d2;border:1px solid #c4c4c4"></div>
<div class="a" style="left:810px;top:104px;width:22px;height:22px;background:#d2d2d2;border:1px solid #c4c4c4"></div>
<div class="a" style="left:834px;top:104px;width:22px;height:22px;background:#e4e4e4;border:1px solid #c4c4c4"></div>
<svg class="a" style="left:690px;top:103px" width="170" height="25" viewBox="690 103 170 25">
<path d="M695 109 H707 M695 109 L699 106 M695 109 L699 112" stroke="#1f9ee0" stroke-width="2" fill="none"/><path d="M696 118 H708 M708 118 L704 115 M708 118 L704 121" stroke="#1f9ee0" stroke-width="2" fill="none"/>
<path d="M723 108 H719 V121 H731 V115" stroke="#3a3f44" stroke-width="1.3" fill="none"/><path d="M724 116 L731 109" stroke="#e8a420" stroke-width="2.5"/><path d="M729 107 H733 V111Z" fill="#e8a420"/>
<circle cx="747" cy="113" r="5.5" fill="none" stroke="#3a3f44" stroke-width="2.5"/><path d="M751 117 L756 122" stroke="#3a3f44" stroke-width="3"/>
<path d="M767 115 H780 M767 115 L772 110 V120Z" stroke="#8a8a8a" stroke-width="2" fill="#8a8a8a"/>
<path d="M790 115 H803 M803 115 L798 110 V120Z" stroke="#8a8a8a" stroke-width="2" fill="#8a8a8a"/>
<path d="M821 110 V122 M821 108 L816 114 H826Z" stroke="#8a8a8a" stroke-width="2" fill="#8a8a8a"/>
<path d="M838 114 L845 107 L852 114 M840 112 V122 H843.5 V116 H846.5 V122 H850 V112" stroke="#3a3f44" stroke-width="1.4" fill="none"/>
</svg>
<div class="a" style="left:311px;top:128px;width:546px;height:4px;background:linear-gradient(90deg,#000 0%,#000 12%,#888 35%,#fff 57%,#444 66%,#000 72%,#000 100%)"></div>
<div class="a" style="left:311px;top:132px;width:546px;height:881px;background:#a9a9a9"></div>
<div class="a" style="left:311px;top:132px;width:546px;height:2px;background:#b6b6b6"></div>
<div class="a" style="left:311px;top:138px;width:546px;height:2px;background:#cdcdcd"></div>
<div class="a" style="left:311px;top:208px;width:546px;height:2px;background:#cdcdcd"></div>
<div class="t b" style="left:313px;top:140px;font-size:11px;color:#fff;letter-spacing:0.5px;transform:scaleX(0.983);transform-origin:left;">ACQUIRE</div>
<div class="t b" style="left:313px;top:210px;font-size:11px;color:#fff;letter-spacing:0.5px;transform:scaleX(0.899);transform-origin:left;">PROCESS</div>
<!-- block 0 -->
<div class="t b" style="left:509px;top:148px;font-size:11px;color:#f4f4f4;transform:scaleX(0.960);transform-origin:left;">0. EnumerateImages: Sorted</div>
<svg class="a" style="left:651px;top:146px" width="14" height="14" viewBox="0 0 14 14"><circle cx="7" cy="7" r="4.5" fill="#555"/><g stroke="#555" stroke-width="2.2"><path d="M7 0.5 V13.5 M0.5 7 H13.5 M2.4 2.4 L11.6 11.6 M11.6 2.4 L2.4 11.6"/></g><circle cx="7" cy="7" r="1.8" fill="#888"/></svg>
<div class="a" style="left:387px;top:161px;width:402px;height:42px;border:1px solid #7a7a7a;background:#eef0fa"></div>
<div class="a" style="left:514px;top:162px;width:146px;height:40px;background:#f8fcf8;border-left:1px solid #9a9a9a;border-right:1px solid #9a9a9a"></div>
<div class="a" style="left:661px;top:162px;width:127px;height:19px;background:#d6ebf0;border-bottom:1px solid #b0b0b0"></div>
<div class="t" style="left:390px;top:177px;font-size:11.5px;transform:scaleX(0.913);transform-origin:left;">outImage</div>
<div class="t" style="left:660px;top:166px;width:124px;text-align:right;font-size:11.5px;transform:scaleX(0.902);transform-origin:right;">inDirectory</div>
<div class="t" style="left:660px;top:186px;width:124px;text-align:right;font-size:11.5px;transform:scaleX(0.890);transform-origin:right;">outFileName</div>
<div class="a" style="left:571px;top:166px;width:32px;height:32px;border:1px solid #aaa;background:#fff"></div>
<svg class="a" style="left:571px;top:166px" width="32" height="32"><rect x="6" y="5" width="10" height="13" fill="#4a8ad0" stroke="#ddd" transform="rotate(-12 11 11)"/><rect x="14" y="3" width="10" height="14" fill="#5aa0e0" stroke="#eee"/><rect x="15" y="10" width="8" height="6" fill="#58a838"/><path d="M4 15 H27 L25 29 H5Z" fill="#e8c030"/><path d="M5 18 H29 L26 29 H5Z" fill="#f0d040"/></svg>
<svg class="a" style="left:360px;top:178px" width="30" height="850" viewBox="360 178 30 850"><path d="M387 182 H366 V237 H380" stroke="#fff59a" stroke-width="2" fill="none"/><path d="M379 233 L387 237 L379 241Z" fill="#fff59a"/>
<path d="M366 238 V384" stroke="#fff" stroke-width="2"/>
<path d="M387 338 H373 V384" stroke="#fff59a" stroke-width="2" fill="none"/>
<path d="M366 373 H380" stroke="#fff" stroke-width="2"/><path d="M379 369 L387 373 L379 377Z" fill="#fff"/></svg>
<!-- block 1 -->
<div class="a" style="left:383px;top:214px;width:409px;height:136px;background:#f57800"></div>
<div class="t b" style="left:383px;top:217px;width:409px;text-align:center;font-size:11px;color:#fff;transform:scaleX(0.927);transform-origin:center;">1. LocateObjects_Edges: Single</div>
<div class="a" style="left:387px;top:228px;width:402px;height:120px;border:1px solid #7a7a7a;background:#f8fcf8"></div>
<div class="a" style="left:388px;top:229px;width:126px;height:17px;background:#d6ebf0;border-bottom:1px solid #a8a8a8"></div>
<div class="t" style="left:390px;top:232px;font-size:11.5px;color:#000;transform:scaleX(0.916);transform-origin:left;">inImage</div>
<div class="a" style="left:388px;top:246px;width:126px;height:17px;background:#d6ebf0;border-bottom:1px solid #a8a8a8"></div>
<div class="t" style="left:390px;top:249px;font-size:11.5px;color:#000;transform:scaleX(0.900);transform-origin:left;">inSearchRegion*</div>
<div class="a" style="left:388px;top:263px;width:126px;height:17px;background:#fcfce8;border-bottom:1px solid #a8a8a8"></div>
<div class="t" style="left:390px;top:266px;font-size:11.5px;color:#a8a8a8;transform:scaleX(0.909);transform-origin:left;">diagEdgePyramid[ ]</div>
<div class="a" style="left:388px;top:280px;width:126px;height:17px;background:#fcfce8;border-bottom:1px solid #a8a8a8"></div>
<div class="t" style="left:390px;top:283px;font-size:11.5px;color:#a8a8a8;transform:scaleX(0.906);transform-origin:left;">diagMatchPyramid[ ]</div>
<div class="a" style="left:388px;top:297px;width:126px;height:17px;background:#f8fcf8;border-bottom:1px solid #a8a8a8"></div>
<div class="a" style="left:390px;top:299px;width:61px;height:13px;background:#88cce6;border-radius:2px"></div>
<div class="t" style="left:390px;top:300px;font-size:11.5px;color:#000;transform:scaleX(0.908);transform-origin:left;">ObjectEdges</div>
<div class="a" style="left:388px;top:314px;width:126px;height:17px;background:#f8fcf8;border-bottom:1px solid #a8a8a8"></div>
<div class="a" style="left:390px;top:316px;width:29px;height:13px;background:#e8aa8a;border-radius:2px"></div>
<div class="t" style="left:390px;top:317px;font-size:11.5px;color:#000;transform:scaleX(0.922);transform-origin:left;">Match</div>
<div class="a" style="left:388px;top:331px;width:126px;height:17px;background:#f8fcf8;border-bottom:1px solid #a8a8a8"></div>
<div class="a" style="left:390px;top:333px;width:47px;height:13px;background:#8ee08e;border-radius:2px"></div>
<div class="t" style="left:390px;top:334px;font-size:11.5px;color:#000;transform:scaleX(0.898);transform-origin:left;">Alignment</div>
<div class="a" style="left:509px;top:266px;width:5px;height:9px;border-radius:5px 0 0 5px;background:#3a90e0"></div>
<div class="a" style="left:509px;top:283px;width:5px;height:9px;border-radius:5px 0 0 5px;background:#3a90e0"></div>
<div class="a" style="left:514px;top:229px;width:1px;height:118px;background:#9a9a9a"></div>
<div class="a" style="left:660px;top:229px;width:1px;height:118px;background:#9a9a9a"></div>
<div class="a" style="left:661px;top:229px;width:127px;height:59px;background:#fcfce8;border-bottom:1px solid #b0b0b0"></div>
<div class="t" style="left:660px;top:253px;width:124px;text-align:right;font-size:11.5px;color:#a8a8a8;transform:scaleX(0.909);transform-origin:right;">diagScores[ ]?</div>
<div class="a" style="left:758px;top:311px;width:28px;height:14px;background:#8484e0;border-radius:2px"></div>
<div class="t" style="left:758px;top:312px;font-size:11.5px;transform:scaleX(0.855);transform-origin:left;">Score</div>
<div class="a" style="left:571px;top:272px;width:32px;height:32px;border:1px solid #aaa;background:#fff"></div>
<svg class="a" style="left:571px;top:272px" width="32" height="32"><path d="M19 2 L22.5 10 L31 10.5 L24.5 16 L27 25 L19.5 20 L12 24 L14 16 L8 10.5 L16 10Z" fill="#c4c4c8" stroke="#aaa" stroke-width="0.6"/><path d="M11 7 L12 14 L3 16 L10 21 L8 30 L16 25 L22 28" stroke="#e8a020" stroke-width="1.6" fill="none" stroke-dasharray="2.2 1.2"/></svg>
<div class="t" style="left:514px;top:333px;width:146px;text-align:center;font-size:11.5px;color:#2a80e0;transform:scaleX(0.905);transform-origin:center;">Show/Hide Ports</div>
<!-- block 2 -->
<div class="t b" style="left:383px;top:353px;width:409px;text-align:center;font-size:11px;color:#f4f4f4;transform:scaleX(0.938);transform-origin:center;">2. FitCircle: ToEdges?</div>
<div class="a" style="left:387px;top:364px;width:402px;height:60px;border:1px solid #7a7a7a;background:#f8fcf8"></div>
<div class="a" style="left:388px;top:365px;width:126px;height:17px;background:#d6ebf0;border-bottom:1px solid #a8a8a8"></div>
<div class="t" style="left:390px;top:368px;font-size:11.5px;transform:scaleX(0.916);transform-origin:left;">inImage</div>
<div class="a" style="left:514px;top:365px;width:1px;height:60px;background:#9a9a9a"></div>
<div class="a" style="left:660px;top:365px;width:128px;height:60px;background:#d6ebf0;border-left:1px solid #9a9a9a"></div>
<div class="t" style="left:660px;top:375px;width:124px;text-align:right;font-size:11.5px;transform:scaleX(0.894);transform-origin:right;">inSamplingParams</div>
<div class="a" style="left:857px;top:102px;width:6px;height:913px;background:#f0f0f0"></div><div class="a" style="left:859px;top:79px;width:4px;height:23px;background:#f0f0f0"></div>

<!-- IMAGE VIEW -->
<div class="a" style="left:863px;top:79px;width:1057px;height:23px;background:#f0f0f0;border-top:1px solid #a8a8a8;border-left:1px solid #a8a8a8"></div>
<svg class="a" style="left:866px;top:80px" width="110" height="22"><path d="M1 21 L14 2 Q15 1 17 1 H103 Q105 1 105 3 V21Z" fill="#fff" stroke="#a8a8a8"/></svg>
<div class="t b" style="left:882px;top:85px;font-size:12px">outImage (+16)</div>
<svg class="a" style="left:1872px;top:82px" width="46" height="18"><path d="M10.5 5 L6.5 8.5 L10.5 12Z" fill="none" stroke="#111" stroke-width="1.2"/><path d="M21.5 5 L25.5 8.5 L21.5 12Z" fill="none" stroke="#111" stroke-width="1.2"/><path d="M35 5 L42 12 M42 5 L35 12" stroke="#111" stroke-width="2.4"/></svg>
<div class="a" style="left:864px;top:100px;width:1056px;height:634px;background:#ffd800"></div>
<svg class="a" style="left:866px;top:102px" width="1050" height="630" viewBox="866 102 1050 630">
<defs>
<pattern id="ck" x="866" y="102" width="50" height="50" patternUnits="userSpaceOnUse"><rect x="0" y="0" width="50" height="50" fill="#1f1f1f"/><rect x="0" y="0" width="25" height="25" fill="#454545"/><rect x="25" y="25" width="25" height="25" fill="#454545"/></pattern>
<linearGradient id="bg" gradientUnits="userSpaceOnUse" x1="0" y1="110" x2="0" y2="725"><stop offset="0" stop-color="#c9c9c9"/><stop offset="0.15" stop-color="#dedede"/><stop offset="0.45" stop-color="#eaeaea"/><stop offset="1" stop-color="#ececec"/></linearGradient><linearGradient id="hl" gradientUnits="userSpaceOnUse" x1="0" y1="170" x2="0" y2="600"><stop offset="0" stop-color="#e4e4e4"/><stop offset="0.4" stop-color="#f3f3f3"/><stop offset="1" stop-color="#f4f4f4"/></linearGradient><linearGradient id="rv" gradientUnits="userSpaceOnUse" x1="1745" y1="0" x2="1802" y2="0"><stop offset="0" stop-color="#000" stop-opacity="0"/><stop offset="1" stop-color="#000" stop-opacity="0.25"/></linearGradient>
</defs>
<rect x="866" y="102" width="1050" height="630" fill="url(#ck)"/>
<rect x="982" y="110" width="820" height="615" fill="url(#bg)"/>
<g fill="#0c0c0c">
<path d="M1125 174 Q1130 152 1160 151 L1181 153 L1265 165 Q1276 164 1285 157 Q1295 151 1311 152 L1350 155 L1420 164 L1442 163 L1489 175 L1506 185 L1556 207 Q1575 210 1588 200 A70 70 0 0 1 1709 270 Q1690 300 1662 310 Q1650 322 1656 360 A229 229 0 0 1 1611 547 Q1602 562 1609 576 A46 46 0 1 1 1538 639 Q1515 625 1495 628 L1440 638 Q1425 642 1410 643 L1360 636 Q1340 633 1330 625 Q1320 616 1300 612 L1175 587 L1090 572 Q1066 563 1060 537 L1065 495 L1078 414 Q1076 400 1068 393 Q1052 375 1052 352 Q1054 332 1070 325 Q1094 315 1098 300 L1104 269 L1111 245 L1119 188 Z"/>
</g>
<g fill="url(#hl)">
<path d="M1148 186 Q1150 177 1158 178 L1196 182 L1254 190 Q1262 201 1270 201 Q1280 201 1285 190 L1305 195 L1300 222 Q1292 213 1280 215 Q1268 220 1266 238 Q1262 256 1240 288 Q1226 308 1217 330 Q1206 360 1205 400 Q1205 452 1225 487 Q1222 497 1217 505 Q1211 517 1218 527 Q1222 531 1230 530 L1245 548 L1240 565 L1222 560 L1222 550 Q1215 540 1205 545 Q1198 550 1193 564 L1125 554 L1095 549 Q1088 545 1089 535 L1094 488 L1111 400 L1125 330 L1135 265 L1144 197 Z"/>
<circle cx="1437" cy="402" r="197"/>
<circle cx="1310" cy="197" r="25"/>
<circle cx="1248" cy="553" r="26"/>
<circle cx="1645.5" cy="240.5" r="56"/>
<circle cx="1575" cy="610" r="33"/>
<circle cx="1077" cy="353" r="13"/>
</g>
<rect x="1745" y="110" width="57" height="615" fill="url(#rv)"/>
<path d="M1104 269 L1098 306 Q1066 327 1066 327 Q1052 340 1052 352 Q1057 382 1073 398 L1078 414 L1073 449" fill="none" stroke="#1e8a2e" stroke-width="2"/>
<path d="M1133 271 L1102 454" stroke="#b878e8" stroke-width="2.5"/>
<path d="M1055 258 L1144 272 L1113 458 L1025 443Z" fill="none" stroke="#2a9ae8" stroke-width="2"/>
<path d="M1052 250 L1062 258 L1052 266Z" fill="#2a9ae8"/>
<path d="M1286 190 A25 25 0 1 1 1298 219" fill="none" stroke="#e8c020" stroke-width="3"/>
<path d="M1302 220 L1316 220 L1309 230Z" fill="#e8c020"/>
<path d="M1309 197 L1247 550" stroke="#8e1818" stroke-width="1.6"/>
<path d="M1309 189 V205 M1301 197 H1317" stroke="#2a9ae8" stroke-width="3"/>
<path d="M1234 531 A26 26 0 1 1 1227 568" fill="none" stroke="#6ee09a" stroke-width="2.5"/>
<path d="M1224 560 L1222 574 L1236 570Z" fill="#6ee09a"/>
<path d="M1247 544 V560 M1239 552 H1255" stroke="#e8861a" stroke-width="3"/>
<circle cx="1645.5" cy="240.5" r="56" fill="none" stroke="#2aa040" stroke-width="2.5"/>
<path d="M1645 232 V248 M1637 240 H1653" stroke="#e020e0" stroke-width="3"/>
<path d="M1645 240 L1575 608" stroke="#e86a6a" stroke-width="1.6"/>
<circle cx="1575" cy="610" r="33" fill="none" stroke="#80e8e8" stroke-width="2.5"/>
<path d="M1575 602 V618 M1567 610 H1583" stroke="#20a898" stroke-width="3"/>
<circle cx="1077" cy="353" r="13" fill="none" stroke="#5a9aa0" stroke-width="2" stroke-opacity="0.8"/>
<rect x="866" y="102" width="237" height="289" fill="#000" fill-opacity="0.45"/>
<rect x="866" y="132" width="116" height="1" fill="#fff" fill-opacity="0.12"/><rect x="982" y="132" width="121" height="1" fill="#fff" fill-opacity="0.6"/>
</svg>
<div class="t" style="left:870px;top:105px;font-size:12px;color:#90e890;line-height:14px;transform:scaleX(0.885);transform-origin:left;">Zoom: 125%<br>-83, 285</div>
<svg class="a" style="left:1030px;top:133px" width="75" height="258" viewBox="1030 133 75 258">
<path d="M1075 147 Q1077 138 1086 137 M1078 144 Q1083 144 1084 140" stroke="#70cc70" stroke-width="1.4" fill="none"/><circle cx="1095" cy="142" r="6" fill="#8ee08e"/><path d="M1092 139 L1098 145 M1098 139 L1092 145" stroke="#6a6a6a" stroke-width="1.8"/>
<rect x="1036" y="151" width="4" height="10" fill="#1f9ee0"/><g fill="#8ee08e"><rect x="1045" y="152" width="10" height="1.6"/><rect x="1045" y="155" width="10" height="1.6"/><rect x="1045" y="158" width="10" height="1.6"/></g><path d="M1075 161 Q1077 152 1086 151 M1078 158 Q1083 158 1084 154" stroke="#70cc70" stroke-width="1.4" fill="none"/><circle cx="1095" cy="156" r="6" fill="#8ee08e"/><path d="M1092 153 L1098 159 M1098 153 L1092 159" stroke="#6a6a6a" stroke-width="1.8"/>
<rect x="1036" y="165" width="4" height="10" fill="#e8861a"/><g fill="#8ee08e"><rect x="1045" y="166" width="10" height="1.6"/><rect x="1045" y="169" width="10" height="1.6"/><rect x="1045" y="172" width="10" height="1.6"/></g><path d="M1061 165 H1059 V175 H1061 M1069 165 H1071 V175 H1069 M1062 166 L1068 170 L1062 174" stroke="#999" stroke-width="1" fill="none"/><path d="M1075 175 Q1077 166 1086 165 M1078 172 Q1083 172 1084 168" stroke="#70cc70" stroke-width="1.4" fill="none"/><circle cx="1095" cy="170" r="6" fill="#8ee08e"/><path d="M1092 167 L1098 173 M1098 167 L1092 173" stroke="#6a6a6a" stroke-width="1.8"/>
<rect x="1036" y="179" width="4" height="10" fill="#20b040"/><g fill="#8ee08e"><rect x="1045" y="180" width="10" height="1.6"/><rect x="1045" y="183" width="10" height="1.6"/><rect x="1045" y="186" width="10" height="1.6"/></g><path d="M1075 189 Q1077 180 1086 179 M1078 186 Q1083 186 1084 182" stroke="#70cc70" stroke-width="1.4" fill="none"/><circle cx="1095" cy="184" r="6" fill="#8ee08e"/><path d="M1092 181 L1098 187 M1098 181 L1092 187" stroke="#6a6a6a" stroke-width="1.8"/>
<rect x="1036" y="193" width="4" height="10" fill="#b070e0"/><g fill="#8ee08e"><rect x="1045" y="194" width="10" height="1.6"/><rect x="1045" y="197" width="10" height="1.6"/><rect x="1045" y="200" width="10" height="1.6"/></g><path d="M1061 193 H1059 V203 H1061 M1069 193 H1071 V203 H1069 M1062 194 L1068 198 L1062 202" stroke="#999" stroke-width="1" fill="none"/><path d="M1075 203 Q1077 194 1086 193 M1078 200 Q1083 200 1084 196" stroke="#70cc70" stroke-width="1.4" fill="none"/><circle cx="1095" cy="198" r="6" fill="#8ee08e"/><path d="M1092 195 L1098 201 M1098 195 L1092 201" stroke="#6a6a6a" stroke-width="1.8"/>
<rect x="1036" y="207" width="4" height="10" fill="#80e8e8"/><g fill="#8ee08e"><rect x="1045" y="208" width="10" height="1.6"/><rect x="1045" y="211" width="10" height="1.6"/><rect x="1045" y="214" width="10" height="1.6"/></g><path d="M1075 217 Q1077 208 1086 207 M1078 214 Q1083 214 1084 210" stroke="#70cc70" stroke-width="1.4" fill="none"/><circle cx="1095" cy="212" r="6" fill="#8ee08e"/><path d="M1092 209 L1098 215 M1098 209 L1092 215" stroke="#6a6a6a" stroke-width="1.8"/>
<rect x="1036" y="221" width="4" height="10" fill="#e05a5a"/><g fill="#8ee08e"><rect x="1045" y="222" width="10" height="1.6"/><rect x="1045" y="225" width="10" height="1.6"/><rect x="1045" y="228" width="10" height="1.6"/></g><path d="M1075 231 Q1077 222 1086 221 M1078 228 Q1083 228 1084 224" stroke="#70cc70" stroke-width="1.4" fill="none"/><circle cx="1095" cy="226" r="6" fill="#8ee08e"/><path d="M1092 223 L1098 229 M1098 223 L1092 229" stroke="#6a6a6a" stroke-width="1.8"/>
<rect x="1036" y="235" width="4" height="10" fill="#e8c020"/><g fill="#8ee08e"><rect x="1045" y="236" width="10" height="1.6"/><rect x="1045" y="239" width="10" height="1.6"/><rect x="1045" y="242" width="10" height="1.6"/></g><path d="M1075 245 Q1077 236 1086 235 M1078 242 Q1083 242 1084 238" stroke="#70cc70" stroke-width="1.4" fill="none"/><circle cx="1095" cy="240" r="6" fill="#8ee08e"/><path d="M1092 237 L1098 243 M1098 237 L1092 243" stroke="#6a6a6a" stroke-width="1.8"/>
<rect x="1036" y="249" width="4" height="10" fill="#4a40e8"/><g fill="#8ee08e"><rect x="1045" y="250" width="10" height="1.6"/><rect x="1045" y="253" width="10" height="1.6"/><rect x="1045" y="256" width="10" height="1.6"/></g><path d="M1061 249 H1059 V259 H1061 M1069 249 H1071 V259 H1069 M1062 250 L1068 254 L1062 258" stroke="#999" stroke-width="1" fill="none"/><path d="M1075 259 Q1077 250 1086 249 M1078 256 Q1083 256 1084 252" stroke="#70cc70" stroke-width="1.4" fill="none"/><circle cx="1095" cy="254" r="6" fill="#8ee08e"/><path d="M1092 251 L1098 257 M1098 251 L1092 257" stroke="#6a6a6a" stroke-width="1.8"/>
<rect x="1036" y="263" width="4" height="10" fill="#b07840"/><g fill="#8ee08e"><rect x="1045" y="264" width="10" height="1.6"/><rect x="1045" y="267" width="10" height="1.6"/><rect x="1045" y="270" width="10" height="1.6"/></g><path d="M1061 263 H1059 V273 H1061 M1069 263 H1071 V273 H1069 M1062 264 L1068 268 L1062 272" stroke="#999" stroke-width="1" fill="none"/><path d="M1075 273 Q1077 264 1086 263 M1078 270 Q1083 270 1084 266" stroke="#70cc70" stroke-width="1.4" fill="none"/><circle cx="1095" cy="268" r="6" fill="#8ee08e"/><path d="M1092 265 L1098 271 M1098 265 L1092 271" stroke="#6a6a6a" stroke-width="1.8"/>
<rect x="1036" y="277" width="4" height="10" fill="#60e0a0"/><g fill="#8ee08e"><rect x="1045" y="278" width="10" height="1.6"/><rect x="1045" y="281" width="10" height="1.6"/><rect x="1045" y="284" width="10" height="1.6"/></g><path d="M1075 287 Q1077 278 1086 277 M1078 284 Q1083 284 1084 280" stroke="#70cc70" stroke-width="1.4" fill="none"/><circle cx="1095" cy="282" r="6" fill="#8ee08e"/><path d="M1092 279 L1098 285 M1098 279 L1092 285" stroke="#6a6a6a" stroke-width="1.8"/>
<rect x="1036" y="291" width="4" height="10" fill="#a01818"/><g fill="#8ee08e"><rect x="1045" y="292" width="10" height="1.6"/><rect x="1045" y="295" width="10" height="1.6"/><rect x="1045" y="298" width="10" height="1.6"/></g><path d="M1075 301 Q1077 292 1086 291 M1078 298 Q1083 298 1084 294" stroke="#70cc70" stroke-width="1.4" fill="none"/><circle cx="1095" cy="296" r="6" fill="#8ee08e"/><path d="M1092 293 L1098 299 M1098 293 L1092 299" stroke="#6a6a6a" stroke-width="1.8"/>
<rect x="1036" y="305" width="4" height="10" fill="#e020e0"/><g fill="#8ee08e"><rect x="1045" y="306" width="10" height="1.6"/><rect x="1045" y="309" width="10" height="1.6"/><rect x="1045" y="312" width="10" height="1.6"/></g><path d="M1075 315 Q1077 306 1086 305 M1078 312 Q1083 312 1084 308" stroke="#70cc70" stroke-width="1.4" fill="none"/><circle cx="1095" cy="310" r="6" fill="#8ee08e"/><path d="M1092 307 L1098 313 M1098 307 L1092 313" stroke="#111" stroke-width="1.8"/>
<rect x="1036" y="319" width="4" height="10" fill="#20b0a0"/><g fill="#8ee08e"><rect x="1045" y="320" width="10" height="1.6"/><rect x="1045" y="323" width="10" height="1.6"/><rect x="1045" y="326" width="10" height="1.6"/></g><path d="M1075 329 Q1077 320 1086 319 M1078 326 Q1083 326 1084 322" stroke="#70cc70" stroke-width="1.4" fill="none"/><circle cx="1095" cy="324" r="6" fill="#8ee08e"/><path d="M1092 321 L1098 327 M1098 321 L1092 327" stroke="#111" stroke-width="1.8"/>
<rect x="1036" y="333" width="4" height="10" fill="#1f9ee0"/><g fill="#8ee08e"><rect x="1045" y="334" width="10" height="1.6"/><rect x="1045" y="337" width="10" height="1.6"/><rect x="1045" y="340" width="10" height="1.6"/></g><path d="M1075 343 Q1077 334 1086 333 M1078 340 Q1083 340 1084 336" stroke="#70cc70" stroke-width="1.4" fill="none"/><circle cx="1095" cy="338" r="6" fill="#8ee08e"/><path d="M1092 335 L1098 341 M1098 335 L1092 341" stroke="#111" stroke-width="1.8"/>
<rect x="1036" y="347" width="4" height="10" fill="#e8861a"/><g fill="#8ee08e"><rect x="1045" y="348" width="10" height="1.6"/><rect x="1045" y="351" width="10" height="1.6"/><rect x="1045" y="354" width="10" height="1.6"/></g><path d="M1075 357 Q1077 348 1086 347 M1078 354 Q1083 354 1084 350" stroke="#70cc70" stroke-width="1.4" fill="none"/><circle cx="1095" cy="352" r="6" fill="#8ee08e"/><path d="M1092 349 L1098 355 M1098 349 L1092 355" stroke="#111" stroke-width="1.8"/>
<rect x="1036" y="361" width="4" height="3" fill="#20a0a0"/><rect x="1036" y="364" width="4" height="3" fill="#e8a020"/><rect x="1036" y="367" width="4" height="4" fill="#008000"/><g fill="#8ee08e"><rect x="1045" y="362" width="10" height="1.6"/><rect x="1045" y="365" width="10" height="1.6"/><rect x="1045" y="368" width="10" height="1.6"/></g><path d="M1061 361 H1059 V371 H1061 M1069 361 H1071 V371 H1069 M1062 362 L1068 366 L1062 370" stroke="#999" stroke-width="1" fill="none"/><path d="M1075 371 Q1077 362 1086 361 M1078 368 Q1083 368 1084 364" stroke="#70cc70" stroke-width="1.4" fill="none"/><circle cx="1095" cy="366" r="6" fill="#8ee08e"/><path d="M1092 363 L1098 369 M1098 363 L1092 369" stroke="#111" stroke-width="1.8"/>
</svg>
<div class="t" style="left:870px;top:136px;font-size:12px;color:#8ee08e;transform:scaleX(0.885);transform-origin:left;">outImage 656x492 1xUInt8</div>
<div class="t" style="left:870px;top:150px;font-size:12px;color:#8ee08e;transform:scaleX(0.885);transform-origin:left;">outObject.Match (Match)</div>
<div class="t" style="left:870px;top:164px;font-size:12px;color:#8ee08e;transform:scaleX(0.885);transform-origin:left;">diagScanSegments (No data)</div>
<div class="t" style="left:870px;top:178px;font-size:12px;color:#8ee08e;transform:scaleX(0.885);transform-origin:left;">outCircle</div>
<div class="t" style="left:870px;top:192px;font-size:12px;color:#8ee08e;transform:scaleX(0.885);transform-origin:left;">diagScanSegments (No data)</div>
<div class="t" style="left:870px;top:206px;font-size:12px;color:#8ee08e;transform:scaleX(0.885);transform-origin:left;">outCircle</div>
<div class="t" style="left:870px;top:220px;font-size:12px;color:#8ee08e;transform:scaleX(0.885);transform-origin:left;">outConnectingSegment</div>
<div class="t" style="left:870px;top:234px;font-size:12px;color:#8ee08e;transform:scaleX(0.885);transform-origin:left;">outArc</div>
<div class="t" style="left:870px;top:248px;font-size:12px;color:#8ee08e;transform:scaleX(0.885);transform-origin:left;">diagScanSegments (No data)</div>
<div class="t" style="left:870px;top:262px;font-size:12px;color:#8ee08e;transform:scaleX(0.885);transform-origin:left;">diagScanSegments (No data)</div>
<div class="t" style="left:870px;top:276px;font-size:12px;color:#8ee08e;transform:scaleX(0.885);transform-origin:left;">outArc</div>
<div class="t" style="left:870px;top:290px;font-size:12px;color:#8ee08e;transform:scaleX(0.885);transform-origin:left;">outConnectingSegment</div>
<div class="t" style="left:870px;top:304px;font-size:12px;color:#8ee08e;transform:scaleX(0.885);transform-origin:left;">outCircle.Center (CircleCenter1)</div>
<div class="t" style="left:870px;top:318px;font-size:12px;color:#8ee08e;transform:scaleX(0.885);transform-origin:left;">outCircle.Center (CircleCenter2)</div>
<div class="t" style="left:870px;top:332px;font-size:12px;color:#8ee08e;transform:scaleX(0.885);transform-origin:left;">outArc.Center (ArcCenter1)</div>
<div class="t" style="left:870px;top:346px;font-size:12px;color:#8ee08e;transform:scaleX(0.885);transform-origin:left;">outArc.Center (ArcCenter2)</div>
<div class="t" style="left:870px;top:360px;font-size:12px;color:#8ee08e;transform:scaleX(0.885);transform-origin:left;">outObjectEdges (ObjectEdges) [3]</div>
<svg class="a" style="left:977px;top:376px" width="14" height="12"><path d="M2 6 L7 2 L12 6 M2 10 L7 6 L12 10" stroke="#8ee08e" stroke-width="1.5" fill="none"/></svg>

<!-- DATA PREVIEW -->
<div class="a" style="left:865px;top:734px;width:1055px;height:4px;background:#f8f8f8"></div>
<div class="a" style="left:865px;top:738px;width:1055px;height:20px;background:#f0f0f0;border-bottom:1px solid #a8a8a8"></div>
<svg class="a" style="left:866px;top:738px" width="102" height="21"><path d="M1 20 L19 2 Q20 1 22 1 H97 Q99 1 99 3 V20Z" fill="#fff" stroke="#a8a8a8"/><rect x="2" y="19" width="96" height="2" fill="#fff"/></svg>
<div class="t" style="left:882px;top:744px;font-size:11.5px;letter-spacing:-0.3px;transform:scaleX(0.985);transform-origin:left;">outDistance (+2)</div>
<svg class="a" style="left:1872px;top:740px" width="46" height="18"><path d="M10.5 5 L6.5 8.5 L10.5 12Z" fill="none" stroke="#111" stroke-width="1.2"/><path d="M21.5 5 L25.5 8.5 L21.5 12Z" fill="none" stroke="#111" stroke-width="1.2"/><path d="M35 5 L42 12 M42 5 L35 12" stroke="#111" stroke-width="2.4"/></svg>
<div class="a" style="left:865px;top:758px;width:1054px;height:257px;background:#fff;border-left:1px solid #a8a8a8;border-right:1px solid #a8a8a8;border-bottom:1px solid #a8a8a8"></div>
<div class="a" style="left:966px;top:760px;width:82px;height:64px;border:1px solid #808080;background:#fff"></div>
<div class="a" style="left:967px;top:782px;width:80px;height:20px;background:#eef0fa;border-top:1px solid #808080;border-bottom:1px solid #808080"></div>
<div class="a" style="left:867px;top:760px;width:100px;height:64px;border:2px solid #111;border-left-width:1px;background:#f0f0f0"></div>
<div class="a" style="left:867px;top:780px;width:100px;height:2px;background:#111"></div>
<div class="a" style="left:867px;top:801px;width:100px;height:2px;background:#111"></div>
<div class="t" style="left:872px;top:765px;font-size:13px;transform:scaleX(1.089);transform-origin:left;">outDistance</div>
<div class="t" style="left:872px;top:786px;font-size:13px;transform:scaleX(1.089);transform-origin:left;">outDistance</div>
<div class="t" style="left:872px;top:807px;font-size:13px;transform:scaleX(1.066);transform-origin:left;">outFileName</div>
<div class="t" style="left:971px;top:765px;font-size:13px;font-family:'Liberation Mono',monospace">301.174</div>
<div class="t" style="left:971px;top:786px;font-size:13px;font-family:'Liberation Mono',monospace">288.112</div>
<div class="t" style="left:971px;top:807px;font-size:13px;font-family:'Liberation Mono',monospace">00028.png</div>
<svg class="a" style="left:1755px;top:29px" width="14" height="14"><circle cx="7" cy="4" r="3.2" fill="#3d6e9a"/><path d="M1 13 Q1 7.5 7 7.5 Q13 7.5 13 13Z" fill="#3d6e9a"/></svg>
<div class="a" style="left:1841px;top:30px;width:1px;height:13px;background:#c8c8c8"></div>
<svg class="a" style="left:1848px;top:29px" width="15" height="15"><g fill="none" stroke="#222" stroke-width="1.2"><circle cx="7.5" cy="7.5" r="6"/><ellipse cx="7.5" cy="7.5" rx="2.6" ry="6"/><path d="M1.5 7.5 H13.5 M2.5 4.5 H12.5 M2.5 10.5 H12.5"/></g></svg>

<!-- DIALOG -->
<div class="a" style="left:256px;top:381px;width:616px;height:540px;background:rgba(0,0,0,0.06);border-radius:3px;filter:blur(2px)"></div>
<div class="a" style="left:259px;top:383px;width:609px;height:533px;background:#f0f0f0;border:1px solid #9a9a9a"></div>
<div class="a" style="left:260px;top:384px;width:607px;height:30px;background:#fff"></div>
<svg class="a" style="left:268px;top:391px" width="17" height="15"><g stroke="#111" stroke-width="0.8"><rect x="0.5" y="1" width="2.5" height="13" fill="#e53030"/><rect x="4.5" y="0.5" width="2.5" height="13.5" fill="#3a7ad8"/><rect x="8.5" y="7" width="2.5" height="7" fill="#30a030"/><rect x="12.5" y="4" width="2.5" height="10" fill="#f0a030"/></g></svg>
<div class="t" style="left:289px;top:393px;font-size:12px;color:#7a7a7a;transform:scaleX(0.972);transform-origin:left;">Program Statistics</div>
<div class="a" style="left:748px;top:398px;width:11px;height:1px;background:#e0e0e0"></div>
<div class="a" style="left:793px;top:392px;width:11px;height:11px;border:1px solid #555"></div>
<svg class="a" style="left:839px;top:392px" width="12" height="12"><path d="M0.5 0.5 L11.5 11.5 M11.5 0.5 L0.5 11.5" stroke="#555" stroke-width="1.1"/></svg>
<div class="a" style="left:260px;top:414px;width:607px;height:21px;background:#f0f0f0"></div><div class="a" style="left:260px;top:414px;width:46px;height:21px;background:#fff"></div>
<div class="a" style="left:305px;top:434px;width:562px;height:1px;background:#d9d9d9"></div>
<div class="a" style="left:260px;top:435px;width:607px;height:444px;background:#fff"></div>
<div class="a" style="left:305px;top:416px;width:44px;height:19px;background:#f0f0f0;border:1px solid #d9d9d9"></div>
<div class="t" style="left:305px;top:420px;width:44px;text-align:center;font-size:11.5px;transform:scaleX(0.885);transform-origin:center;">Details</div>
<div class="a" style="left:348px;top:416px;width:58px;height:19px;background:#f0f0f0;border:1px solid #d9d9d9"></div>
<div class="t" style="left:348px;top:420px;width:58px;text-align:center;font-size:11.5px;transform:scaleX(0.910);transform-origin:center;">Licensing</div>
<div class="a" style="left:405px;top:416px;width:53px;height:19px;background:#f0f0f0;border:1px solid #d9d9d9"></div>
<div class="t" style="left:405px;top:420px;width:53px;text-align:center;font-size:11.5px;transform:scaleX(0.899);transform-origin:center;">Modules</div>
<div class="a" style="left:457px;top:416px;width:54px;height:19px;background:#f0f0f0;border:1px solid #d9d9d9"></div>
<div class="t" style="left:457px;top:420px;width:54px;text-align:center;font-size:11.5px;transform:scaleX(0.902);transform-origin:center;">Structure</div>
<div class="a" style="left:260px;top:414px;width:46px;height:21px;border-top:1px solid #d9d9d9;border-right:1px solid #d9d9d9"></div>
<div class="t" style="left:268px;top:418px;font-size:11.5px;transform:scaleX(0.879);transform-origin:left;">Time</div>
<div class="t b" style="left:289px;top:445px;font-size:11.5px;transform:scaleX(0.964);transform-origin:left;">Program:</div>
<div class="t" style="left:295px;top:463px;font-size:11.5px;transform:scaleX(0.972);transform-origin:left;">Total: 4411.6 ms.</div>
<div class="t" style="left:295px;top:481px;font-size:11.5px;transform:scaleX(0.966);transform-origin:left;">Native Filters: 34.5%, Data Transfers: 0.8%, HMI: 0.0%, GUI: 64.4%, Other: 0.3%.</div>
<div class="t b" style="left:289px;top:502px;font-size:11.5px;transform:scaleX(0.948);transform-origin:left;">This macro:</div>
<div class="t" style="left:295px;top:520px;font-size:11.5px;transform:scaleX(0.975);transform-origin:left;">Initialization Time: 0.0 ms</div>
<div class="t" style="left:449px;top:520px;font-size:11.5px;transform:scaleX(0.939);transform-origin:left;">HMI Inputs: 0.0 ms</div>
<div class="t" style="left:295px;top:538px;font-size:11.5px;transform:scaleX(0.952);transform-origin:left;">Average Iteration: 4.59 ms</div>
<div class="t" style="left:449px;top:538px;font-size:11.5px;transform:scaleX(0.944);transform-origin:left;">HMI Outputs: 0.0 ms</div>
<div class="t" style="left:295px;top:556px;font-size:11.5px;transform:scaleX(0.956);transform-origin:left;">Number of Iterations: 339</div>
<div class="t" style="left:295px;top:574px;font-size:11.5px;transform:scaleX(0.975);transform-origin:left;">Finalization Time: 0.0 ms</div>
<div class="t b" style="left:289px;top:595px;font-size:11.5px;transform:scaleX(0.956);transform-origin:left;">Average iteration times:</div>
<div class="a" style="left:287px;top:615px;width:71px;height:221px;border:1px solid #000;background:#000"></div>
<div class="a" style="left:288px;top:616px;width:69px;height:154px;background:#008000"></div>
<div class="a" style="left:288px;top:771px;width:69px;height:41px;background:#0000ff"></div>
<div class="a" style="left:288px;top:813px;width:69px;height:5px;background:#ffa500"></div>
<div class="a" style="left:288px;top:819px;width:69px;height:5px;background:#ffd700"></div>
<div class="a" style="left:288px;top:825px;width:69px;height:2px;background:#c0e8f8"></div>
<div class="a" style="left:288px;top:828px;width:69px;height:3px;background:#d8d8d8"></div>
<div class="a" style="left:288px;top:832px;width:69px;height:3px;background:#d8d8d8"></div>
<div class="a" style="left:367px;top:615px;width:17px;height:17px;background:#008000;border:1px solid #000"></div>
<div class="t" style="left:390px;top:618px;font-size:11.5px;color:#000;transform:scaleX(0.928);transform-origin:left;">3.237 ms</div>
<div class="t" style="left:424px;top:618px;width:52px;text-align:right;font-size:11.5px;color:#000;transform:scaleX(0.920);transform-origin:right;">70.60%</div>
<div class="t" style="left:483px;top:618px;font-size:11.5px;color:#000">:</div>
<div class="t" style="left:488px;top:618px;font-size:11.5px;color:#000;transform:scaleX(0.944);transform-origin:left;">(0) EnumerateImages</div>
<div class="a" style="left:367px;top:639px;width:17px;height:17px;background:#0000ff;border:1px solid #000"></div>
<div class="t" style="left:390px;top:642px;font-size:11.5px;color:#000;transform:scaleX(0.928);transform-origin:left;">0.864 ms</div>
<div class="t" style="left:424px;top:642px;width:52px;text-align:right;font-size:11.5px;color:#000;transform:scaleX(0.920);transform-origin:right;">18.83%</div>
<div class="t" style="left:483px;top:642px;font-size:11.5px;color:#000">:</div>
<div class="t" style="left:488px;top:642px;font-size:11.5px;color:#000;transform:scaleX(0.965);transform-origin:left;">(1) LocateSingleObject_Edges</div>
<div class="a" style="left:367px;top:663px;width:17px;height:17px;background:#ffa500;border:1px solid #000"></div>
<div class="t" style="left:390px;top:666px;font-size:11.5px;color:#000;transform:scaleX(0.928);transform-origin:left;">0.136 ms</div>
<div class="t" style="left:424px;top:666px;width:52px;text-align:right;font-size:11.5px;color:#000;transform:scaleX(0.905);transform-origin:right;">2.98%</div>
<div class="t" style="left:483px;top:666px;font-size:11.5px;color:#000">:</div>
<div class="t" style="left:488px;top:666px;font-size:11.5px;color:#000;">(2) FitCircleToEdges</div>
<div class="a" style="left:367px;top:687px;width:17px;height:17px;background:#ffd700;border:1px solid #000"></div>
<div class="t" style="left:390px;top:690px;font-size:11.5px;color:#000;transform:scaleX(0.927);transform-origin:left;">0.111 ms</div>
<div class="t" style="left:424px;top:690px;width:52px;text-align:right;font-size:11.5px;color:#000;transform:scaleX(0.905);transform-origin:right;">2.43%</div>
<div class="t" style="left:483px;top:690px;font-size:11.5px;color:#000">:</div>
<div class="t" style="left:488px;top:690px;font-size:11.5px;color:#000;">(3) FitCircleToEdges</div>
<div class="a" style="left:367px;top:711px;width:17px;height:17px;background:#add8e6;border:1px solid #000"></div>
<div class="t" style="left:390px;top:714px;font-size:11.5px;color:#000;transform:scaleX(0.928);transform-origin:left;">0.077 ms</div>
<div class="t" style="left:424px;top:714px;width:52px;text-align:right;font-size:11.5px;color:#000;transform:scaleX(0.905);transform-origin:right;">1.68%</div>
<div class="t" style="left:483px;top:714px;font-size:11.5px;color:#000">:</div>
<div class="t" style="left:488px;top:714px;font-size:11.5px;color:#000;transform:scaleX(0.984);transform-origin:left;">(5) FitArcToEdges</div>
<div class="a" style="left:367px;top:735px;width:17px;height:17px;background:#d3d3d3;border:1px solid #000"></div>
<div class="t" style="left:390px;top:738px;font-size:11.5px;color:#000;transform:scaleX(0.928);transform-origin:left;">0.071 ms</div>
<div class="t" style="left:424px;top:738px;width:52px;text-align:right;font-size:11.5px;color:#000;transform:scaleX(0.905);transform-origin:right;">1.54%</div>
<div class="t" style="left:483px;top:738px;font-size:11.5px;color:#000">:</div>
<div class="t" style="left:488px;top:738px;font-size:11.5px;color:#000;transform:scaleX(0.984);transform-origin:left;">(6) FitArcToEdges</div>
<div class="a" style="left:367px;top:759px;width:17px;height:17px;background:#800080;border:1px solid #000"></div>
<div class="t" style="left:390px;top:762px;font-size:11.5px;color:#000;transform:scaleX(0.928);transform-origin:left;">0.005 ms</div>
<div class="t" style="left:424px;top:762px;width:52px;text-align:right;font-size:11.5px;color:#000;transform:scaleX(0.929);transform-origin:right;">0.11%</div>
<div class="t" style="left:483px;top:762px;font-size:11.5px;color:#000">:</div>
<div class="t" style="left:488px;top:762px;font-size:11.5px;color:#000;transform:scaleX(0.981);transform-origin:left;">(4) PointToPointDistance</div>
<div class="a" style="left:367px;top:783px;width:17px;height:17px;background:#808080;border:1px solid #000"></div>
<div class="t" style="left:390px;top:786px;font-size:11.5px;color:#000;transform:scaleX(0.928);transform-origin:left;">0.003 ms</div>
<div class="t" style="left:424px;top:786px;width:52px;text-align:right;font-size:11.5px;color:#000;transform:scaleX(0.905);transform-origin:right;">0.07%</div>
<div class="t" style="left:483px;top:786px;font-size:11.5px;color:#000">:</div>
<div class="t" style="left:488px;top:786px;font-size:11.5px;color:#000;transform:scaleX(0.981);transform-origin:left;">(7) PointToPointDistance</div>
<div class="a" style="left:367px;top:807px;width:17px;height:17px;background:#d3d3d3;border:1px solid #000"></div>
<div class="t" style="left:390px;top:810px;font-size:11.5px;color:#8a8a8a;transform:scaleX(0.928);transform-origin:left;">0.080 ms</div>
<div class="t" style="left:424px;top:810px;width:52px;text-align:right;font-size:11.5px;color:#8a8a8a;transform:scaleX(0.905);transform-origin:right;">1.76%</div>
<div class="t" style="left:483px;top:810px;font-size:11.5px;color:#8a8a8a">:</div>
<div class="t" style="left:505px;top:810px;font-size:11.5px;color:#8a8a8a;transform:scaleX(0.980);transform-origin:left;">Other</div>
<div class="a" style="left:844px;top:437px;width:17px;height:439px;background:#f0f0f0"></div>
<div class="a" style="left:845px;top:455px;width:15px;height:383px;background:#cdcdcd"></div>
<svg class="a" style="left:844px;top:437px" width="17" height="439"><path d="M5 11 L8.5 7.5 L12 11" stroke="#555" stroke-width="1.3" fill="none"/><path d="M5 427 L8.5 430.5 L12 427" stroke="#555" stroke-width="1.3" fill="none"/></svg>
<div class="a" style="left:272px;top:890px;width:13px;height:13px;border:1px solid #333;background:#fff"></div>
<div class="t" style="left:291px;top:891px;font-size:11.5px;transform:scaleX(0.915);transform-origin:left;">Show this window automatically after program execution</div>
<div class="a" style="left:657px;top:885px;width:106px;height:25px;background:#e1e1e1;border:1px solid #adadad"></div>
<div class="t" style="left:657px;top:891px;width:106px;text-align:center;font-size:11.5px;transform:scaleX(0.918);transform-origin:center;">Save Statistics</div>
<div class="a" style="left:772px;top:885px;width:92px;height:25px;background:#e1e1e1;border:2px solid #0078d7"></div>
<div class="t" style="left:772px;top:891px;width:92px;text-align:center;font-size:11.5px;transform:scaleX(0.962);transform-origin:center;">OK</div>

<!-- STATUS BAR -->
<div class="a" style="left:0;top:1015px;width:1920px;height:25px;background:linear-gradient(#fafafa,#f0f0f0)"></div>
<div class="t b" style="left:3px;top:1022px;font-size:12px;color:#7a0000;transform:scaleX(1.012);transform-origin:left;">Paused</div>
<div class="t b" style="left:54px;top:1022px;font-size:12px;transform:scaleX(1.097);transform-origin:left;">Main(Register Outputs)</div>
<div class="t b" style="left:1583px;top:1022px;font-size:12px;transform:scaleX(1.128);transform-origin:left;">Iterations per second: 77.52</div>
<div class="t b" style="left:1787px;top:1022px;font-size:12px;transform:scaleX(1.107);transform-origin:left;">Time elapsed: 4.42 s</div>

</body></html>
